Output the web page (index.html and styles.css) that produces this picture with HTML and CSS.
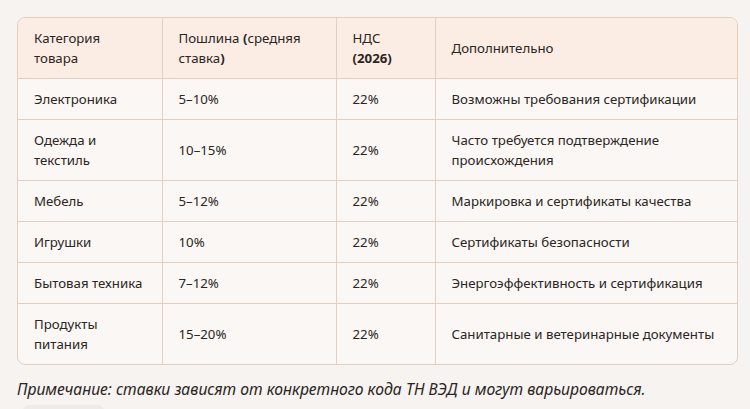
FILE: index.html
```html
<!DOCTYPE html>
<html lang="ru">
<head>
<meta charset="utf-8">
<link rel="stylesheet" href="styles.css">
</head>
<body>
<div class="page">
  <div class="table-wrap">
    <table class="rates">
      <colgroup>
        <col class="c1"><col class="c2"><col class="c3"><col class="c4">
      </colgroup>
      <thead>
        <tr>
          <th>Категория товара</th>
          <th>Пошлина <b>(</b>средняя ставка<b>)</b></th>
          <th>НДС <b>(2026)</b></th>
          <th>Дополнительно</th>
        </tr>
      </thead>
      <tbody>
        <tr><td>Электроника</td><td>5–10%</td><td>22%</td><td>Возможны требования сертификации</td></tr>
        <tr><td>Одежда и текстиль</td><td>10–15%</td><td>22%</td><td>Часто требуется подтверждение происхождения</td></tr>
        <tr><td>Мебель</td><td>5–12%</td><td>22%</td><td>Маркировка и сертификаты качества</td></tr>
        <tr><td>Игрушки</td><td>10%</td><td>22%</td><td>Сертификаты безопасности</td></tr>
        <tr><td>Бытовая техника</td><td>7–12%</td><td>22%</td><td>Энергоэффективность и сертификация</td></tr>
        <tr><td>Продукты питания</td><td>15–20%</td><td>22%</td><td>Санитарные и ветеринарные документы</td></tr>
      </tbody>
    </table>
  </div>
  <p class="note">Примечание: ставки зависят от конкретного кода ТН ВЭД и могут варьироваться.</p>
  <div class="chip"></div>
</div>
</body>
</html>
```
FILE: styles.css
```css
html, body {
  margin: 0;
  padding: 0;
  background: #f7f3f0;
}
body {
  font-family: "Noto Sans", "Open Sans", sans-serif;
  color: #2a2623;
  overflow: hidden;
}
.page {
  padding: 17px 14px 0 17px;
}
.table-wrap {
  width: 719px;
  border: 1px solid #e3cfc2;
  border-radius: 8px;
  overflow: hidden;
  background: #fbf7f4;
}
.rates {
  width: 100%;
  border-collapse: collapse;
  table-layout: fixed;
  font-size: 13.25px;
  line-height: 20px;
}
.c1 { width: 144px; }
.c2 { width: 174px; }
.c3 { width: 99px; }
.c4 { width: auto; }
.rates th, .rates td {
  padding: 10px 16px;
  text-align: left;
  vertical-align: middle;
  border-right: 1px solid #e3cfc2;
  border-bottom: 1px solid #e3cfc2;
}
.rates th:last-child, .rates td:last-child { border-right: none; }
.rates tbody tr:last-child td { border-bottom: none; }
.rates th {
  font-weight: 400;
  background: #fcede4;
}
.rates th b { font-weight: 700; }
.note {
  margin: 14px 0 0 0;
  font-style: italic;
  font-size: 15.7px;
  line-height: 20px;
  color: #2a2623;
}
.chip {
  margin: 6px 0 0 5px;
  width: 83px;
  height: 20px;
  border-radius: 8px;
  background: #efebe8;
}
```
